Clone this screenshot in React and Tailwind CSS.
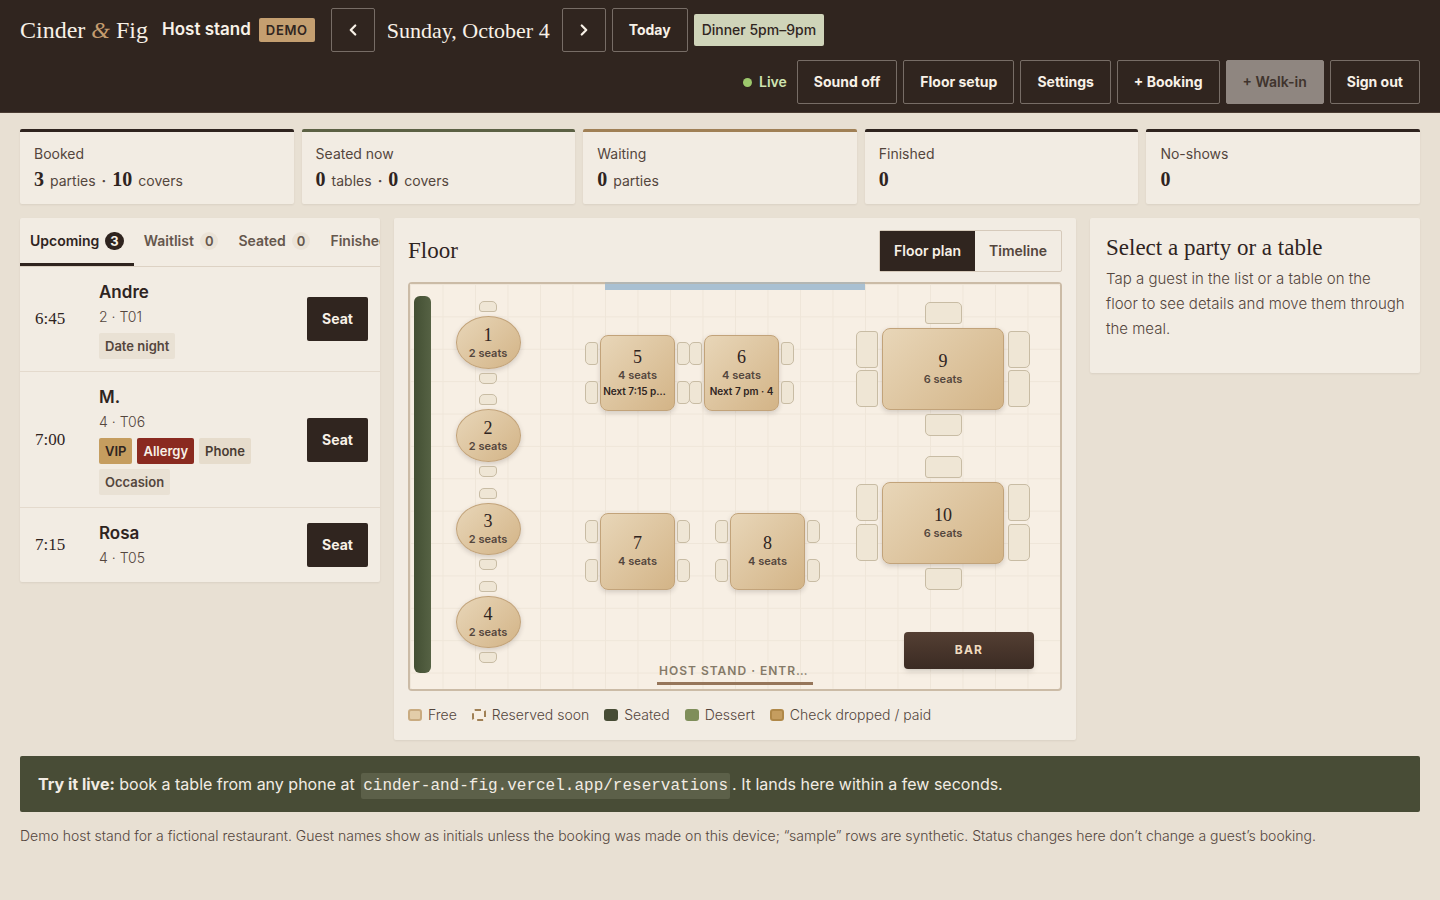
import { useState } from "react";
import { ChevronLeft, ChevronRight } from "lucide-react";
import clsx from "clsx";

const STATS = [
  { label: "Booked", accent: "border-[#2f241f]", parts: [["3", "parties"], ["10", "covers"]] },
  { label: "Seated now", accent: "border-[#5c6144]", parts: [["0", "tables"], ["0", "covers"]] },
  { label: "Waiting", accent: "border-[#a08055]", parts: [["0", "parties"]] },
  { label: "Finished", accent: "border-[#2f241f]", parts: [["0"]] },
  { label: "No-shows", accent: "border-[#2f241f]", parts: [["0"]] },
];

const TABS = [
  { name: "Upcoming", count: 3 },
  { name: "Waitlist", count: 0 },
  { name: "Seated", count: 0 },
  { name: "Finished", count: 0 },
];

const PARTIES = [
  { time: "6:45", name: "Andre", meta: "2 · T01", tags: ["Date night"] },
  { time: "7:00", name: "M.", meta: "4 · T06", tags: ["VIP", "Allergy", "Phone", "Occasion"] },
  { time: "7:15", name: "Rosa", meta: "4 · T05", tags: [] },
];

const TAG_STYLES = {
  VIP: "bg-[#c59d5f] text-[#2f241f]",
  Allergy: "bg-[#8a2a20] font-bold text-[#f8f1e7]",
  Phone: "bg-[#e6dccc] text-[#4a3c33]",
};

// cx, cy, w and h are percentages of the room
const TABLES = [
  { id: 1, kind: "round", seats: 2, cx: 12, cy: 14.5, w: 10, h: 13 },
  { id: 2, kind: "round", seats: 2, cx: 12, cy: 37.5, w: 10, h: 13 },
  { id: 3, kind: "round", seats: 2, cx: 12, cy: 60.5, w: 10, h: 13 },
  { id: 4, kind: "round", seats: 2, cx: 12, cy: 83.5, w: 10, h: 13 },
  { id: 5, kind: "square", seats: 4, cx: 35, cy: 22, w: 11.5, h: 19, next: "Next 7:15 pm · 4" },
  { id: 6, kind: "square", seats: 4, cx: 51, cy: 22, w: 11.5, h: 19, next: "Next 7 pm · 4" },
  { id: 7, kind: "square", seats: 4, cx: 35, cy: 66, w: 11.5, h: 19 },
  { id: 8, kind: "square", seats: 4, cx: 55, cy: 66, w: 11.5, h: 19 },
  { id: 9, kind: "large", seats: 6, cx: 82, cy: 21, w: 18.75, h: 20.3 },
  { id: 10, kind: "large", seats: 6, cx: 82, cy: 59, w: 18.75, h: 20.3 },
];

const LEGEND = [
  { label: "Free", swatch: "border-2 border-[#c9ab80] bg-[#e3cda9]" },
  { label: "Reserved soon", swatch: "border-2 border-dashed border-[#a08055] bg-[#f7efe4]" },
  { label: "Seated", swatch: "bg-[#474c35]" },
  { label: "Dessert", swatch: "bg-[#7f8e5a]" },
  { label: "Check dropped / paid", swatch: "border-2 border-[#b08848] bg-[#c59d5f]" },
];

const serif = "font-['Liberation_Serif',serif]";
const panel = "rounded-xs bg-[#f2ece3] shadow-[0_1px_2px_rgba(47,36,31,0.08)]";

export default function App() {
  return (
    <div className="min-h-screen bg-[#e8e0d3] font-['Inter',sans-serif] text-[#2f241f]">
      <Header />
      <main className="flex flex-col gap-3.5 px-5 pt-4 pb-10">
        <section className="grid grid-cols-5 gap-2">
          {STATS.map((s) => (
            <Stat key={s.label} {...s} />
          ))}
        </section>
        <div className="grid grid-cols-[360px_minmax(0,1fr)_330px] items-start gap-3.5">
          <PartyList />
          <Floor />
          <aside className={clsx(panel, "pt-4 pr-3.5 pb-8 pl-4")}>
            <h2 className={clsx(serif, "text-[23px] leading-7")}>Select a party or a table</h2>
            <p className="mt-1 text-[15px] leading-[25px] font-light text-[#54463d]">
              Tap a guest in the list or a table on the floor to see details and move them through the meal.
            </p>
          </aside>
        </div>
        <p className="mt-0.5 rounded-xs bg-[#484c36] px-[18px] py-3.5 text-base leading-7 text-[#f2ece4]">
          <strong className="font-bold">Try it live:</strong> book a table from any phone at{" "}
          <code className="mx-0.5 rounded-xs bg-[#5c6049] px-0.5 py-1 font-['Liberation_Mono',monospace] text-base leading-none">
            cinder-and-fig.vercel.app/reservations
          </code>
          . It lands here within a few seconds.
        </p>
        <p className="text-sm leading-5 font-light text-[#54463d]">
          Demo host stand for a fictional restaurant. Guest names show as initials unless the booking was made on this
          device; “sample” rows are synthetic. Status changes here don’t change a guest’s booking.
        </p>
      </main>
    </div>
  );
}

function Header() {
  return (
    <header className="flex flex-wrap items-center gap-x-4 gap-y-2 border-b border-[#4a3c33] bg-[#30251f] px-5 py-2 text-[#f8f1e7]">
      <div className="flex items-center">
        <span className={clsx(serif, "text-2xl")}>
          Cinder <span className="text-[#c59d6f] italic">&amp;</span> Fig
        </span>
        <span className="ml-3.5 text-[17px] font-semibold">Host stand</span>
        <span className="ml-2 rounded-xs bg-[#c49f70] px-[7px] text-[13px] leading-6 font-semibold tracking-wider text-[#30251f]">
          DEMO
        </span>
      </div>
      <div className="flex items-center gap-1.5">
        <HeaderButton square label="Previous day">
          <ChevronLeft className="size-[18px]" strokeWidth={3} />
        </HeaderButton>
        <span className={clsx(serif, "px-1.5 text-[22px]")}>Sunday, October 4</span>
        <HeaderButton square label="Next day">
          <ChevronRight className="size-[18px]" strokeWidth={3} />
        </HeaderButton>
        <HeaderButton>Today</HeaderButton>
        <span className="rounded-xs bg-[#cfd4b9] px-2 text-sm leading-8 font-medium text-[#30251f]">
          Dinner 5pm–9pm
        </span>
      </div>
      <div className="ml-auto flex items-center gap-1.5">
        <span className="mr-1 flex items-center gap-[7px] text-sm font-semibold text-[#cfe3b0]">
          <span className="size-[9px] rounded-full bg-[#9dc86c]" />
          Live
        </span>
        <HeaderButton>Sound off</HeaderButton>
        <HeaderButton>Floor setup</HeaderButton>
        <HeaderButton>Settings</HeaderButton>
        <HeaderButton>+ Booking</HeaderButton>
        <HeaderButton disabled>+ Walk-in</HeaderButton>
        <HeaderButton>Sign out</HeaderButton>
      </div>
    </header>
  );
}

function HeaderButton({ square, label, disabled, children }) {
  return (
    <button
      type="button"
      aria-label={label}
      disabled={disabled}
      className={clsx(
        "flex h-11 items-center justify-center rounded-xs border text-sm font-bold",
        square ? "w-11" : "px-4",
        disabled ? "border-[#8f8680] bg-[#8f8680] font-semibold text-[#40342d]" : "border-[#776d66] text-[#f8f1e7]"
      )}
    >
      {children}
    </button>
  );
}

function Stat({ label, accent, parts }) {
  return (
    <div className={clsx(panel, "border-t-3 px-3.5 pt-2.5 pb-[11px]", accent)}>
      <div className="text-sm leading-6 text-[#54463d]">{label}</div>
      <div className="mt-[3px] flex h-6 items-baseline text-sm leading-6 text-[#54463d]">
        {parts.map(([value, unit], i) => (
          <span key={i}>
            {i > 0 && <span className="mx-1.5 font-bold">·</span>}
            <span className={clsx(serif, "text-xl leading-none font-bold text-[#2f241f]")}>{value}</span>
            {unit && <span className="ml-1.5">{unit}</span>}
          </span>
        ))}
      </div>
    </div>
  );
}

function PartyList() {
  const [tab, setTab] = useState("Upcoming");
  return (
    <section className={clsx(panel, "overflow-hidden")}>
      <div className="flex overflow-hidden border-b border-[#ddd2c4]">
        {TABS.map((t) => {
          const active = t.name === tab;
          return (
            <button
              key={t.name}
              type="button"
              onClick={() => setTab(t.name)}
              className={clsx(
                "flex h-12 shrink-0 items-center gap-1.5 border-b-3 px-2.5 text-sm font-semibold",
                active ? "border-[#2f241f]" : "border-transparent text-[#65574d]"
              )}
            >
              {t.name}
              <span
                className={clsx(
                  "rounded-full px-[5px] text-[13px] leading-[18px]",
                  active ? "bg-[#2f241f] font-bold text-[#f8f1e7]" : "bg-[#ebe3d7]"
                )}
              >
                {t.count}
              </span>
            </button>
          );
        })}
      </div>
      <ul className="divide-y divide-[#e4dacd]">
        {PARTIES.map((p) => (
          <li key={p.name} className="grid grid-cols-[52px_minmax(0,1fr)_auto] items-center gap-3 py-3 pr-3 pl-[15px]">
            <span className={clsx(serif, "text-[17px]")}>{p.time}</span>
            <div>
              <div className="text-[17px] leading-[26px] font-semibold">{p.name}</div>
              <div className="text-sm leading-6 font-light text-[#54463d]">{p.meta}</div>
              {p.tags.length > 0 && (
                <div className="mt-1 flex flex-wrap gap-[5px]">
                  {p.tags.map((tag) => (
                    <span
                      key={tag}
                      className={clsx(
                        "rounded-xs px-1.5 text-[13px] leading-[26px] font-semibold",
                        TAG_STYLES[tag] || "bg-[#e9e1d4] text-[#54463d]"
                      )}
                    >
                      {tag}
                    </span>
                  ))}
                </div>
              )}
            </div>
            <button type="button" className="h-11 rounded-xs bg-[#30251f] px-[15px] text-sm font-bold text-[#f8f1e7]">
              Seat
            </button>
          </li>
        ))}
      </ul>
    </section>
  );
}

function Floor() {
  const [view, setView] = useState("Floor plan");
  return (
    <section className={clsx(panel, "px-3.5 pt-3 pb-[13px]")}>
      <div className="flex items-center justify-between">
        <h2 className={clsx(serif, "text-[23px]")}>Floor</h2>
        <div className="flex rounded-xs border border-[#d6cabb]">
          {["Floor plan", "Timeline"].map((v) => (
            <button
              key={v}
              type="button"
              onClick={() => setView(v)}
              className={clsx(
                "h-10 px-3.5 text-sm font-semibold",
                v === view ? "bg-[#30251f] text-[#f8f1e7]" : "text-[#54463d]"
              )}
            >
              {v}
            </button>
          ))}
        </div>
      </div>
      <div className="relative mt-2.5 aspect-[16/10] rounded-sm border-2 border-[#cbbba6] bg-[#f7efe4]">
        <RoomGrid />
        {/* window */}
        <div className="absolute -top-0.5 left-[30%] h-2 w-[40%] border-t-2 border-[#b3b6b3] bg-[#a9c0d2]" />
        {/* banquette */}
        <div className="absolute top-[3%] left-[0.6%] h-[93%] w-[2.6%] rounded-md bg-linear-to-r from-[#434f33] to-[#566244]" />
        {TABLES.map((t) => (
          <Table key={t.id} {...t} />
        ))}
        <div className="absolute top-[86%] left-[76%] flex h-[9%] w-[20%] items-center justify-center rounded-sm bg-linear-to-b from-[#543f33] to-[#3b2b23] text-xs font-bold tracking-widest text-[#f0dcc0] shadow-md">
          BAR
        </div>
        <div className="absolute bottom-[1%] left-[38%] w-[24%] truncate border-b-3 border-[#96765a] px-0.5 pb-px text-center text-xs leading-5 font-semibold tracking-[1px] text-[#857a68]">
          HOST STAND · ENTRANCE
        </div>
      </div>
      <ul className="mt-3 flex flex-wrap gap-[15px] text-sm leading-6 font-light text-[#54463d]">
        {LEGEND.map((l) => (
          <li key={l.label} className="flex items-center gap-1.5">
            <span className={clsx("h-3 w-3.5 rounded-[3px]", l.swatch)} />
            {l.label}
          </li>
        ))}
      </ul>
    </section>
  );
}

function RoomGrid() {
  return (
    <svg className="absolute inset-0 size-full" aria-hidden="true">
      <defs>
        <pattern id="tiles" width="5%" height="8%">
          <path d="M0 0H200M0 0V200" fill="none" stroke="#efe6d9" strokeWidth="2" />
        </pattern>
      </defs>
      <rect width="100%" height="100%" fill="url(#tiles)" />
    </svg>
  );
}

function Table({ id, kind, seats, cx, cy, w, h, next }) {
  return (
    <div
      className="absolute"
      style={{ left: `${cx - w / 2}%`, top: `${cy - h / 2}%`, width: `${w}%`, height: `${h}%` }}
    >
      {kind !== "square" && (
        <>
          <Chairs side="top" kind={kind} />
          <Chairs side="bottom" kind={kind} />
        </>
      )}
      {kind !== "round" && (
        <>
          <Chairs side="left" kind={kind} />
          <Chairs side="right" kind={kind} />
        </>
      )}
      <button
        type="button"
        className={clsx(
          "flex size-full flex-col items-center justify-center border border-[#c2a37a] bg-linear-135 from-[#e8d6b8] to-[#d3b487] shadow-[0_2px_5px_rgba(47,36,31,0.18)]",
          kind === "round" ? "rounded-[50%]" : "rounded-lg"
        )}
      >
        <span className={clsx(serif, "text-lg leading-5")}>{id}</span>
        <span className="text-[11px] leading-4 font-semibold text-[#54463d]">{seats} seats</span>
        {next && <span className="w-full truncate px-0.5 text-[10px] leading-4 font-semibold">{next}</span>}
      </button>
    </div>
  );
}

const CHAIR_SIDES = {
  top: "inset-x-0 bottom-full mb-1 justify-center",
  bottom: "inset-x-0 top-full mt-1 justify-center",
  left: "inset-y-0 right-full mr-0.5 flex-col",
  right: "inset-y-0 left-full ml-0.5 flex-col",
};

const CHAIR_SHAPES = {
  top: "rounded-[3px] rounded-t-[5px]",
  bottom: "rounded-[3px] rounded-b-[5px]",
  left: "rounded-[3px] rounded-l-[5px]",
  right: "rounded-[3px] rounded-r-[5px]",
};

function Chairs({ side, kind }) {
  const vertical = side === "left" || side === "right";
  const size = clsx(
    kind === "round" && "h-[11px] w-[18px]",
    kind === "square" && "h-[23px] w-[13px]",
    kind === "large" && (vertical ? "h-[37px] w-[22px]" : "h-[22px] w-[37px]")
  );
  return (
    <div
      className={clsx(
        "absolute flex",
        CHAIR_SIDES[side],
        vertical && (kind === "large" ? "justify-evenly px-0.5" : "justify-around")
      )}
    >
      {Array.from({ length: vertical ? 2 : 1 }, (_, i) => (
        <span key={i} className={clsx("border border-[#c8bca4] bg-[#efe6d5]", CHAIR_SHAPES[side], size)} />
      ))}
    </div>
  );
}
